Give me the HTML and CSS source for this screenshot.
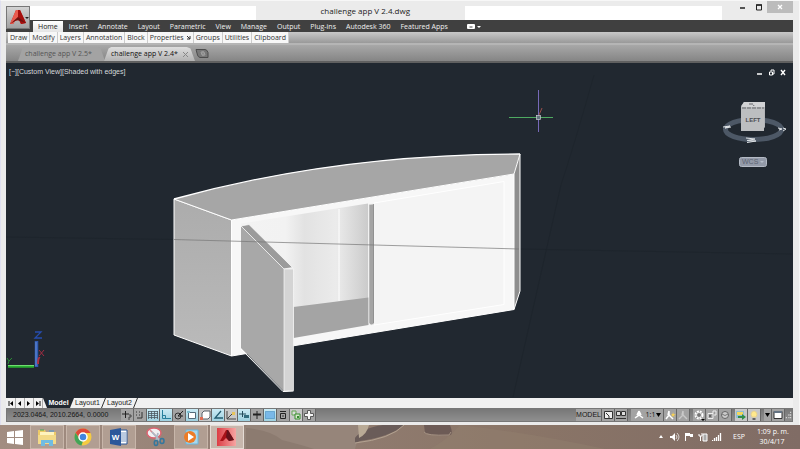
FILE: index.html
```html
<!DOCTYPE html>
<html lang="en">
<head>
<meta charset="utf-8">
<meta name="viewport" content="width=device-width, initial-scale=1">
<title>challenge app V 2.4.dwg</title>
<link rel="stylesheet" href="styles.css">
</head>
<body>
<div class="window">
  <header class="titlebar">
    <button class="app-button" aria-label="Application menu">
      <svg viewBox="0 0 24 23" width="24" height="23"><path d="M3 17 9 3h4l6 13-5 1-2-4-4 1-2 3z" fill="#c9211b"/><path d="M9 3h2v7l-3 4-2 3H3z" fill="#e95b4f"/><path d="m11 3 2 0 6 13-5 1-3-7z" fill="#a50f0d"/><path d="m3 17 8-7 8 6-6-2-3-1z" fill="#6e1211"/><path d="M18 10h4l-2 2z" fill="#222"/></svg>
    </button>
    <div class="title-strip"></div>
    <h1 class="title">challenge app V 2.4.dwg</h1>
    <div class="title-strip wide"></div>
    <div class="window-controls">
      <button aria-label="Minimize"><svg viewBox="0 0 16 12" width="16" height="12"><path d="M5 7h5" stroke="#222" stroke-width="1.5"/></svg></button>
      <button aria-label="Maximize"><svg viewBox="0 0 16 12" width="16" height="12"><path d="M5.500 4v5h5V4z" fill="none" stroke="#222"/><path d="M5 4h6" stroke="#222" stroke-width="1.500"/></svg></button>
      <button class="close" aria-label="Close"><svg viewBox="0 0 16 12" width="16" height="12"><path d="m6 4 4 4m0-4L6 8" stroke="#fff" stroke-width="1.300"/></svg></button>
    </div>
  </header>

  <nav class="menu">
    <button class="active">Home</button><button>Insert</button><button>Annotate</button><button>Layout</button><button>Parametric</button><button>View</button><button>Manage</button><button>Output</button><button>Plug-ins</button><button>Autodesk 360</button><button>Featured Apps</button>
    <button class="ribbon-toggle" aria-label="Ribbon display"><svg viewBox="0 0 14 6" width="14" height="6"><rect width="8" height="5" rx="1" fill="#fff"/><path d="M2.500 3h3" stroke="#444"/><path d="M10 2h4l-2 2z" fill="#fff"/></svg></button>
  </nav>

  <div class="panels">
    <button>Draw</button><button>Modify</button><button>Layers</button><button>Annotation</button><button>Block</button><button>Properties <svg viewBox="0 0 4 4" width="4" height="4"><path d="m0 0 3 3m0-3v3H0" fill="none" stroke="#333"/></svg></button><button>Groups</button><button>Utilities</button><button>Clipboard</button>
  </div>

  <div class="files">
    <button class="file">challenge app V 2.5*</button>
    <button class="file current"><span>challenge app V 2.4*</span><svg viewBox="0 0 5 5" width="5" height="5"><path d="m0 0 5 5m0-5L0 5" stroke="#888"/></svg></button>
    <button class="new-file" aria-label="New drawing"><svg viewBox="0 0 14 9" width="14" height="9"><path d="M1 .5h9q2 0 3 3v5H5Q3 8 2.500 6z" fill="#777" stroke="#4c4c4c"/><path d="M6 3h3l1 3H7zm2-1v5" fill="none" stroke="#a0a0a0"/></svg></button>
  </div>

  <main class="viewport">
    <svg class="scene" viewBox="0 0 787 335" preserveAspectRatio="xMinYMin meet" role="img" aria-label="Shaded cabinet model with an open door">
      <defs>
        <linearGradient id="back"><stop offset="0" stop-color="#f3f3f3"/><stop offset=".35" stop-color="#f2f2f2"/><stop offset=".5" stop-color="#e2e2e2"/><stop offset=".75" stop-color="#ebebeb"/><stop offset="1" stop-color="#cbcbcb"/></linearGradient>
        <linearGradient id="side" x2="0" y2="1"><stop stop-color="#acacac"/><stop offset="1" stop-color="#bababa"/></linearGradient>
      </defs>
      <g transform="translate(-6 -63)">
        <path d="M6 237 174 239.500M519 249l273 5M594 75q-18 64-33 110l-48 212" fill="none" stroke="#1d242b" stroke-width=".7"/>
        <path d="m174 199 57.500 21V356L174 335z" fill="url(#side)" stroke="#fff"/>
        <path d="M174 199q162-45 346-45l-6 20-282.500 46z" fill="#a6a6a6"/>
        <path d="m231.500 220 282.500-46v135.500L231.500 356z" fill="#f7f7f7"/>
        <path d="m241 223.500 127-20v120.500L241 346z" fill="url(#back)"/>
        <path d="m293.500 307 75-9.500V325l-75 13z" fill="#a4a4a4"/>
        <path d="M339 209v92" stroke="#fff"/>
        <path d="m374 203 130-21.500v123L374 325z" fill="#f4f4f4" stroke="#fff"/>
        <path d="m369 204.500 5-.5v120l-3 1-2-2z" fill="#a4a4a4" stroke="#e9e9e9" stroke-width=".6"/>
        <path d="M373.500 204v119" stroke="#777" stroke-width=".6"/>
        <path d="m514 174 6-20v137l-6 18.500z" fill="#8e8e8e" stroke="#fff"/>
        <path d="M174 199q162-45 346-45" fill="none" stroke="#fff" stroke-width="1.300"/>
        <path d="m174 199 57.500 21L514 174M231.500 220v136L514 309.500" fill="none" stroke="#fff"/>
        <path d="m241 226 43 43v122.500L241 348z" fill="#a8a8a8"/>
        <path d="m241 226 8-1.500 43.500 43-8.500 1.500z" fill="#9b9b9b" stroke="#fff" stroke-width=".7"/>
        <path d="M284 269h9.500v121.500l-9.500 1z" fill="#d4d4d4" stroke="#f8f8f8" stroke-width=".7"/>
        <path d="m241 349 42 42.500 10.500-.5" fill="none" stroke="#fff"/>
        <path d="m174 239.500 345 9.500" stroke="#777" stroke-width=".7"/>
        <path d="M538.500 90v42" stroke="#7769b8"/><path d="M509 117.500h44" stroke="#4eaa61"/><path d="m539 115 3-7" stroke="#9c504d"/><rect x="536.500" y="115.500" width="4" height="4" fill="#64717d" stroke="#cad1d5" stroke-width=".7"/>
        <ellipse cx="753.500" cy="129.500" rx="28" ry="10" fill="none" stroke="#4d5866" stroke-width="5"/>
        <path d="m741 106 3-4h21v25l-3 4z" fill="#b2b4b7"/>
        <path d="M741 107h23v24h-23z" fill="#bcbec0"/><path d="m741 107 3-5h21v5z" fill="#d1d2d4"/>
        <path d="M742 108h22M749 104h4l1 2" fill="none" stroke="#626469" stroke-dasharray="4 1"/>
        <text x="753" y="122" class="cube-label">LEFT</text>
        <path d="m746 138 9 1-8 1.500 9 .5-9 1.500" fill="none" stroke="#dfe3e6"/>
        <path d="m723 127 7-1-5 2 6-1" fill="none" stroke="#dfe3e6"/>
        <path d="m778 128 4 1-3 1m4-2 3 1-3 2" fill="none" stroke="#dfe3e6"/>
        <rect x="739.500" y="157.500" width="27" height="9" rx="2" fill="#939aa8" stroke="#b4bac5"/>
        <text x="742" y="164" class="wcs">WCS</text><path d="M760 161h4l-2 2z" fill="#b6bec9"/>
        <path d="M8 366.500h26" stroke="#28ad31" stroke-width="2.500"/><path d="M8 365.500h26" stroke="#71dc71"/>
        <path d="M36.500 341v26" stroke="#315bb0" stroke-width="3.500"/><path d="M36 342v24" stroke="#678ed6"/>
        <path d="M38 364q0-7 2-6" fill="none" stroke="#ae3141" stroke-width="2"/>
        <path d="M35 332h6l-6 6h7" fill="none" stroke="#264cae" stroke-width="1.300"/><path d="m39 350 5 6m0-6-5 6" stroke="#a32c42"/><path d="m7 358 2 3 3-3m-3 3-1 3" fill="none" stroke="#2a8b35"/>
      </g>
    </svg>
    <div class="view-label">[−][Custom View][Shaded with edges]</div>
    <div class="view-controls">
      <button aria-label="Minimize view"><svg viewBox="0 0 7 7" width="7" height="7"><path d="M1 5h5" stroke="#fff" stroke-width="1.500"/></svg></button>
      <button aria-label="Restore view"><svg viewBox="0 0 7 7" width="7" height="7"><path d="M1.500 3h3v3h-3zM3 2.500V1h3v4H5" fill="none" stroke="#fff"/></svg></button>
      <button aria-label="Close view"><svg viewBox="0 0 7 7" width="7" height="7"><path d="m1 1 4 5m0-5L1 6" stroke="#fff" stroke-width="1.400"/></svg></button>
    </div>
  </main>

  <div class="layouts">
    <div class="pager">
      <button aria-label="First"><svg viewBox="0 0 8 8" width="8" height="8"><path d="M2 2v5" stroke="#111"/><path d="M6 2v5L3 4.500z"/></svg></button>
      <button aria-label="Previous"><svg viewBox="0 0 8 8" width="8" height="8"><path d="M5 2v5L2 4.500z"/></svg></button>
      <button aria-label="Next"><svg viewBox="0 0 8 8" width="8" height="8"><path d="M2 2v5l3-2.500z"/></svg></button>
      <button aria-label="Last"><svg viewBox="0 0 8 8" width="8" height="8"><path d="M6 2v5" stroke="#111"/><path d="M2 2v5l3-2.500z"/></svg></button>
    </div>
    <button class="layout model">Model</button><button class="layout">Layout1</button><svg class="slash" viewBox="0 0 5 10"><path d="M.5 10 4.500 0" stroke="#333"/></svg><button class="layout">Layout2</button><svg class="slash" viewBox="0 0 5 10"><path d="M.5 10 4.500 0" stroke="#333"/></svg>
  </div>

  <footer class="status">
    <output class="coords">2023.0464, 2010.2664, 0.0000</output>
    <div class="tools">
      <button aria-label="Infer constraints"><svg viewBox="0 0 12 12"><path d="M1 5h7M4.500 2v7" stroke="#222"/><path d="M8 6h2v2H8v3" fill="none" stroke="#444"/></svg></button>
      <button aria-label="Snap"><svg viewBox="0 0 12 12"><path d="M3 9h5V3M2 3h1m2 0h1M2 6h1m2 0h1" fill="none" stroke="#333"/></svg></button>
      <button class="on" aria-label="Grid"><svg viewBox="0 0 12 12"><path d="M1 2.500h10M1 4.500h10M1 6.500h10M1 8.500h10M1.500 2v8M4.500 2v8M7.500 2v8M10.500 2v8" stroke="#4d5962" stroke-width=".8"/></svg></button>
      <button class="on" aria-label="Ortho"><svg viewBox="0 0 12 12"><path d="M2.500 1v8.500H11M2 6.500h3.500V10" fill="none" stroke="#277f9c"/></svg></button>
      <button aria-label="Polar"><svg viewBox="0 0 12 12"><circle cx="5" cy="7" r="3" fill="none" stroke="#333"/><path d="m5 7 5-5M5 7h5" stroke="#222"/></svg></button>
      <button class="on" aria-label="Object snap"><svg viewBox="0 0 12 12"><path d="M2.500 3.500h7v6h-7z" fill="#fff" stroke="#526a79"/><path d="M1 2h3v2H1z" fill="#7dbbcc"/></svg></button>
      <button class="light" aria-label="3D object snap"><svg viewBox="0 0 12 12"><path d="m3 4 2-2h6v6l-2 2H3z" fill="#fff" stroke="#596069"/><path d="M1 8h3v3H1z" fill="#e16d54"/></svg></button>
      <button class="on" aria-label="Object tracking"><svg viewBox="0 0 12 12"><path d="M9 2 3 9h8" fill="none" stroke="#225c70" stroke-width="1.300"/></svg></button>
      <button class="light" aria-label="Dynamic UCS"><svg viewBox="0 0 12 12"><path d="M2 2v8h9M2 10l7-7" fill="none" stroke="#444"/><path d="M7 3h3v3H7z" fill="#e7c45a"/></svg></button>
      <button class="on" aria-label="Dynamic input"><svg viewBox="0 0 12 12"><path d="M1 5h7M4.500 2v6" stroke="#244d5d"/><path d="M6 6h5v3H6z" fill="#326c7e"/></svg></button>
      <button aria-label="Lineweight"><svg viewBox="0 0 12 12"><path d="M2 5.500h8" stroke="#222" stroke-width="2"/><path d="M6 2v8" stroke="#222"/></svg></button>
      <button class="on" aria-label="Transparency"><svg viewBox="0 0 12 12"><path d="M1.500 2.500h9v7h-9z" fill="#79b8e8" stroke="#3480b7" stroke-dasharray="1 1"/></svg></button>
      <button aria-label="Quick properties"><svg viewBox="0 0 12 12"><path d="M3.500 4.500h5v5h-5zM3 2.500h6" fill="none" stroke="#222"/><path d="M5 7h2" stroke="#333"/></svg></button>
      <button class="light" aria-label="Selection cycling"><svg viewBox="0 0 12 12"><path d="M2 2h4v4H2z" fill="#ddd" stroke="#67a755"/><path d="M5 5h5v5H5z" fill="#d6e7c9" stroke="#378c31"/><path d="M7 7h2v2H7z" fill="#378c31"/></svg></button>
      <button aria-label="Annotation monitor"><svg viewBox="0 0 12 12"><path d="M4.500 1.500h3v3h3v3h-3v3h-3v-3h-3v-3h3z" fill="#f5f5f5" stroke="#595959"/></svg></button>
    </div>
    <div class="status-right">
      <div class="group"><button class="model-space">MODEL</button>
      <button aria-label="Quick view layouts"><svg viewBox="0 0 12 12"><path d="M2.500 2.500h8v7h-8z" fill="#eee" stroke="#333"/><path d="m4 4 3 3v2" fill="none" stroke="#333"/></svg></button>
      <button aria-label="Quick view drawings"><svg viewBox="0 0 12 12"><path d="M1.500 2.500h4v4h-4zm5 0h4v4h-4zM1 9.500h10" fill="#ddd" stroke="#333"/></svg></button></div>
      <div class="group"><button class="scale"><svg viewBox="0 0 12 12"><path d="M6 2v4l-4 3m4-3 4 3M6 2l-2 4m2-4 2 4" fill="none" stroke="#fff" stroke-width="1.500"/></svg>1:1<svg class="arrow" viewBox="0 0 5 4"><path d="M0 0h5L2.500 4z"/></svg></button>
      <button aria-label="Annotation visibility"><svg viewBox="0 0 12 12"><path d="M5 2v4l-3 4m3-4 4 4M5 2 4 6" fill="none" stroke="#fff" stroke-width="1.500"/><path d="m9 3 .7 2H12l-2 1 .7 2L9 7 7.500 8 8 6 7 5h1.500z" fill="#f4cf56"/></svg></button>
      <button aria-label="Automatic scale"><svg viewBox="0 0 12 12"><path d="M6 2v4l-4 4m4-4 4 4M6 2 5 6" fill="none" stroke="#c9c9c9" stroke-width="1.400"/></svg></button></div>
      <div class="group"><button aria-label="Workspace"><svg viewBox="0 0 12 12"><circle cx="6" cy="6" r="3.500" fill="#777" stroke="#fff" stroke-width="2" stroke-dasharray="2 .8"/><circle cx="6" cy="6" r="2.500" fill="#777" stroke="#eee"/><path d="M8 10h4l-2 2z"/></svg></button>
      <button aria-label="Lock toolbars"><svg viewBox="0 0 12 12"><path d="M2 4.500h5v5H2zm5 0V2h3v4H8" fill="#999" stroke="#eee"/><path d="M4 6v2" stroke="#333"/></svg></button>
      <button aria-label="Hardware acceleration"><svg viewBox="0 0 12 12"><circle cx="6" cy="6" r="3.500" fill="#ccc" stroke="#666"/><path d="M3 5q3 3 6 0" fill="none" stroke="#777"/></svg></button></div>
      <div class="group"><button class="light" aria-label="Drawing tray"><svg viewBox="0 0 12 12"><path d="M1 2h8v7H1z" fill="#8ebdd4"/><path d="M2 3h6v3H2z" fill="#f4d75b"/><path d="M3 7h4V5l4 3-4 3V9H3z" fill="#328c4b"/></svg></button>
      <button class="light" aria-label="Isolate objects"><svg viewBox="0 0 12 12"><path d="M4 8Q2 5 4 3q2-2 4 0t0 5z" fill="#ffe98c" stroke="#e6d18f"/><path d="M4.500 9h3v2h-3z" fill="#666"/></svg></button></div>
      <button class="tray-arrow" aria-label="Status menu"><svg class="arrow" viewBox="0 0 5 4"><path d="M0 0h5L2.500 4z"/></svg></button>
      <button aria-label="Clean screen"><svg viewBox="0 0 12 12"><path d="M2 2.500h8v7H2z" fill="#fff" stroke="#333"/><path d="M2 3h8" stroke="#647383" stroke-width="2"/></svg></button>
      <svg class="grip" viewBox="0 0 8 8"><path d="M6 1h1M4 4h1m1 0h1M1 7h1m2 0h1m1 0h1" stroke="#eee" stroke-width="1.500"/></svg>
    </div>
  </footer>
</div>

<div class="taskbar">
  <svg class="wallpaper" viewBox="0 0 800 24" preserveAspectRatio="none" aria-hidden="true">
    <path d="M247 0h120q-9 10-12 24H245l-10-12z" fill="#96857a"/><path d="M246 3q25 2 36 12 20 5 32 9h-68z" fill="#8c7b70"/>
    <path d="M355 13q7-10 28-13h21q-12 11-44 16l-5 2z" fill="#6a5c59"/><path d="M358 0h11q-2 9-10 13z" fill="#b9aa96"/><path d="M355 18q36-4 49-18" fill="none" stroke="#b3a291"/>
    <path d="M424 0h26q3 8 1 10-14 2-26-2z" fill="#6d5b56"/><path d="M424 7q2 4 25 3l2-3" fill="none" stroke="#a59283"/>
    <path d="M460 0q70 8 145 24H430q17-9 30-24z" fill="#93806f" opacity=".45"/>
  </svg>
  <button class="start" aria-label="Start"><svg viewBox="0 0 16 16" width="16" height="16"><path d="m0 3 7-1v6H0zm8-1 8-1v7H8zM0 9h7v6l-7-1zm8 0h8v7l-8-1z" fill="#fff"/></svg></button>
  <div class="apps">
    <button class="open" aria-label="File Explorer"><svg viewBox="0 0 20 20"><path d="M1 3h7l1 2h10v12H1z" fill="#edca67"/><path d="M3 5h14v7H3z" fill="#fff3bd"/><path d="M1 8h18v9H1z" fill="#f3da88"/><path d="M4 19v-6h12v6h-4v-3H8v3z" fill="#70bce2"/><path d="M3 3h4" stroke="#49a759"/><path d="M12 4h5" stroke="#4d9acf"/></svg></button>
    <button class="open" aria-label="Chrome"><svg viewBox="0 0 20 20"><circle cx="10" cy="10" r="8.500" fill="#f5cb42"/><path d="M2.600 5.800A8.500 8.500 0 0 1 17.500 6H10a4 4 0 0 0-4 5z" fill="#df4939"/><path d="M2.600 5.800 6.500 12 10 14l-1.500 4.500A8.500 8.500 0 0 1 2.600 5.800" fill="#43a458"/><circle cx="10" cy="10" r="4" fill="#4285df" stroke="#fff" stroke-width="1.500"/></svg></button>
    <button class="open" aria-label="Word"><svg viewBox="0 0 20 20"><path d="M10 3h8v14h-8z" fill="#fff" stroke="#2b5797"/><path d="M12 6h5m-5 2h5m-5 2h5m-5 2h5m-5 2h5" stroke="#7594c1"/><path d="m1 3 11-2v18L1 17z" fill="#2b579a"/><text x="6.500" y="13" class="word-mark">W</text></svg></button>
    <button aria-label="Snipping Tool"><svg viewBox="0 0 20 20"><ellipse cx="9" cy="6" rx="7" ry="5" fill="#f1f0f1" stroke="#dc6370" stroke-width="1.500"/><path d="m5 3 10 10" stroke="#d98b93" stroke-width="1.500"/><path d="m7 5 8 9M13 6l-2 8" stroke="#aebac6" stroke-width="1.800"/><ellipse cx="11" cy="16" rx="1.700" ry="2.500" fill="none" stroke="#35779d" stroke-width="1.500"/><ellipse cx="17" cy="14" rx="2" ry="2.500" fill="none" stroke="#35779d" stroke-width="1.500"/></svg></button>
    <button class="open" aria-label="Media Player"><svg viewBox="0 0 20 20"><path d="M5 3h12v14H5z" fill="#a9d8ed" stroke="#68b6da"/><circle cx="9" cy="10" r="6" fill="#ed7c27"/><path d="m7 6 6 4-6 4z" fill="#fff"/></svg></button>
    <button class="open running" aria-label="AutoCAD"><svg viewBox="0 0 20 20"><defs><linearGradient id="cad"><stop stop-color="#dc3d45"/><stop offset="1" stop-color="#f6a5a2"/></linearGradient></defs><path d="M0 1h19v18H0z" fill="url(#cad)"/><path d="m3 14 6-11h2l6 10-5 1-3-3-3 3z" fill="#a81218"/><path d="M10 3h1l6 10-5 1-3-4z" fill="#66131b"/></svg></button>
  </div>
  <div class="tray">
    <button aria-label="Show hidden icons"><svg viewBox="0 0 10 10"><path d="m3 6 2-3 2 3z" fill="#fff"/></svg></button>
    <button aria-label="Volume"><svg viewBox="0 0 10 10"><path d="M0 4h2l3-3v8L2 6H0z" fill="#fff"/><path d="M6 3q2 2 0 4m1-6q4 4 0 8" fill="none" stroke="#eee" stroke-width=".8"/></svg></button>
    <button aria-label="Action Center"><svg viewBox="0 0 10 10"><path d="M1.500 1v8" stroke="#fff"/><path d="M2 1h4v1h3v3H6V4H2z" fill="#fff"/></svg></button>
    <button aria-label="Power"><svg viewBox="0 0 10 10"><path d="M1 2v2h3V1M2.500 4v5" fill="none" stroke="#fff"/><path d="M5 2h4v7H5z" fill="#aaa" stroke="#fff"/></svg></button>
    <button aria-label="Network"><svg viewBox="0 0 10 10"><path d="M.5 9V8m2 1V6m2 3V5m2 4V3m2 6V1" stroke="#fff" stroke-width="1.300"/></svg></button>
    <button class="language">ESP</button>
    <div class="clock"><time>1:09 p. m.</time><time datetime="2017-04-30">30/4/17</time></div>
  </div>
</div>
</body>
</html>
```
FILE: styles.css
```css
* { box-sizing: border-box; }
body {
  margin: 0;
  min-height: 100vh;
  display: flex;
  flex-direction: column;
  background: #ebebeb;
  color: #333;
  font: 7px/10px "Open Sans", "Noto Sans", sans-serif;
}
button {
  margin: 0;
  padding: 0;
  border: 0;
  background: none;
  color: inherit;
  font: inherit;
  white-space: nowrap;
}
svg { display: block; }

.window {
  flex: 1;
  display: flex;
  flex-direction: column;
  padding: 0 6px 3px 5px;
  border: 0 solid #f7f7f7;
  border-width: 1px 1px 0;
  border-left-color: #e0e0f0;
}

.titlebar { display: flex; height: 19px; }
.app-button {
  z-index: 1;
  width: 24px;
  height: 23px;
  margin-top: 5px;
  border: 1px solid #777;
  background: linear-gradient(#d3d3d3, #a1a1a1);
  overflow: hidden;
}
.title-strip { flex: 230; margin-top: 5px; background: #fff; }
.title-strip.wide { flex: 262; }
.title {
  flex: 202;
  margin: 0;
  padding-left: 10px;
  color: #222;
  font-size: 8px;
  font-weight: 400;
  line-height: 20px;
  text-align: center;
}
.window-controls { display: flex; align-items: flex-start; padding-left: 13px; }
.window-controls button { width: 16px; height: 12px; }
.window-controls .close { width: 26px; padding-left: 5px; background: #bcbcbc; }

.menu {
  display: flex;
  align-items: stretch;
  gap: 10px;
  height: 12px;
  padding: 1px 0 0 27px;
  background: #404040;
  color: #f0f0f0;
}
.menu .active {
  margin-right: -4px;
  padding: 0 5px;
  background: linear-gradient(#fff, #e4e4e4);
  color: #222;
}
.ribbon-toggle { margin-left: 9px; }

.panels {
  display: flex;
  height: 11px;
  padding-left: 2px;
  background: linear-gradient(#c8c8c8, #999);
}
.panels button {
  display: flex;
  align-items: center;
  gap: 3px;
  padding: 0 2px;
  border-right: 1px solid #ccc;
  background: #f7f7f7;
}

.files {
  display: flex;
  align-items: flex-end;
  height: 20px;
  padding-left: 12px;
  border-top: 2px solid #b5b5b5;
  border-bottom: 2px solid #606060;
  background: linear-gradient(#a8a8a8, #858585);
}
.file {
  display: flex;
  align-items: center;
  justify-content: space-between;
  width: 87px;
  height: 14px;
  padding: 0 7px;
  clip-path: polygon(0 100%, 5% 10%, 8% 0, 91% 0, 95% 10%, 100% 100%);
  background: #a3a3a3;
  color: #555;
}
.file.current { width: 91px; padding: 0 7px; margin-left: -1px; background: linear-gradient(#dedede, #b3b3b3); color: #111; }
.new-file { align-self: center; }

.viewport {
  position: relative;
  flex: 1;
  min-height: 120px;
  overflow: hidden;
  background: #212830;
}
.scene { width: 100%; }
.view-label, .view-controls { position: absolute; top: 4px; }
.view-label { left: 3px; color: #d7dadd; font-family: "Liberation Sans", sans-serif; }
.view-controls { right: 6px; display: flex; gap: 5px; padding-top: 2px; }

.cube-label, .wcs { font: 700 6px "Liberation Sans", sans-serif; }
.cube-label { fill: #4b4d50; text-anchor: middle; }
.wcs { font-weight: 400; font-size: 7px; fill: #5c6472; }

.layouts {
  display: flex;
  height: 10px;
  padding-left: 1px;
  background: #f1f1f1;
  color: #222;
  font-family: "Liberation Sans", sans-serif;
}
.pager { display: flex; width: 36px; }
.pager button { width: 9px; border-right: 1px solid #aaa; }
.layout { width: 27px; }
.layout.model {
  width: 31px;
  clip-path: polygon(0 0, 100% 0, 87% 100%, 13% 100%);
  background: #212830;
  color: #fff;
  font-weight: 700;
}
.slash { width: 5px; height: 10px; }

.status {
  display: flex;
  height: 14px;
  border: 1px solid #777;
  background: linear-gradient(#777, #8f8f8f);
  color: #161616;
}
.coords { width: 114px; padding-left: 6px; line-height: 12px; font-family: "Liberation Sans", sans-serif; }
.tools, .status-right, .group { display: flex; }
.status button {
  display: flex;
  align-items: center;
  justify-content: center;
  min-width: 13px;
  border-right: 1px solid #666;
  background: #a3a3a3;
}
.status svg { width: 12px; height: 12px; }
.status .on { background: linear-gradient(#cbebf5, #9ed0df); }
.status .light { background: #c8c8c8; }
.status-right { margin-left: auto; }
.group { margin-right: 3px; }
.status .model-space { width: 26px; font-family: "Liberation Sans", sans-serif; }
.status .scale { width: 33px; gap: 1px; }
.status .tray-arrow { min-width: 8px; }
.status .arrow { width: 5px; height: 4px; }
.status .grip { width: 7px; }

.taskbar {
  position: relative;
  display: flex;
  align-items: center;
  height: 24px;
  background: linear-gradient(90deg, #a28d81, #937f74 32%, #8a7567 65%, #806c65);
  color: #fff;
}
.wallpaper { position: absolute; width: 100%; height: 100%; }
.start { position: relative; width: 30px; padding-left: 7px; }
.apps { position: relative; display: flex; gap: 2px; height: 24px; }
.apps button {
  display: grid;
  place-items: center;
  width: 34px;
  height: 24px;
  border: 1px solid transparent;
}
.apps svg { width: 20px; height: 20px; }
.apps .open { border-color: #c8b6aa; background: #b19e92; }
.apps .running { border-color: #e5dcd5; background: #c7b7ad; }
.word-mark { fill: #fff; font: 700 8px "Liberation Sans", sans-serif; text-anchor: middle; }
.tray { position: relative; display: flex; align-items: center; gap: 4px; margin-left: auto; padding-right: 13px; }
.tray svg { width: 10px; height: 10px; }
.language { margin: 0 8px 0 7px; }
.clock { display: flex; flex-direction: column; width: 30px; text-align: center; white-space: nowrap; }
```
